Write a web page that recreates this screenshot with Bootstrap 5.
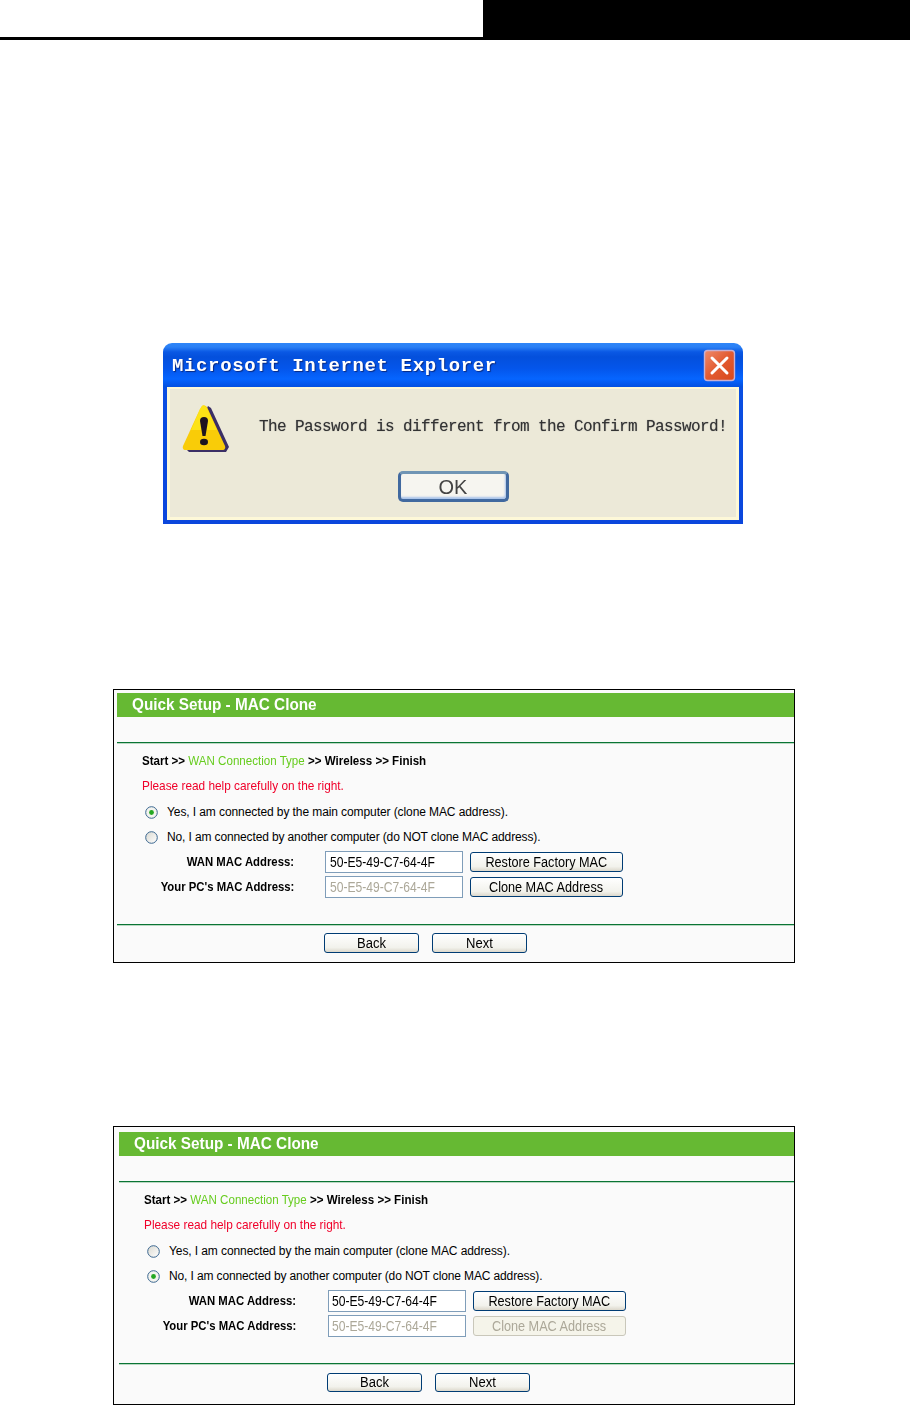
<!DOCTYPE html>
<html lang="en">
<head>
<meta charset="utf-8">
<meta name="viewport" content="width=device-width, initial-scale=1">
<title>Quick Setup - MAC Clone</title>
<link href="https://cdn.jsdelivr.net/npm/bootstrap@5.3.0/dist/css/bootstrap.min.css" rel="stylesheet">
<style>
body{font-family:"Liberation Sans",Arial,sans-serif;color:#000;background:#fff;height:1405px;overflow:hidden}
.topbar{height:40px;border-bottom:3px solid #000}
.topbar-dark{width:427px;background:#000}
/* XP message box */
.xp{width:580px;height:181px;margin:303px 0 0 163px;background:linear-gradient(#2f86f8 0,#2a80f5 4px,#0a58e4 9px,#0450dc 14px,#0455ea 25px,#0665ff 36px,#0450e0 44px,#0b4fe2 46px,#0b46dc 100%);border-radius:9px 9px 0 0;padding:0 4px 4px;filter:blur(.3px)}
.xp-title{height:44px;padding:1px 3px 0 5px}
.xp-title span{font:bold 19px "Liberation Mono",monospace;letter-spacing:.63px;color:#fff;text-shadow:1px 1px 1px #0a2a80;filter:blur(.6px)}
.xp-body{height:133px;background:#ece9d8;border:3px solid #fdf8d8;border-top-width:2px}
.xp-row{height:82px;padding-left:12px}
.xp-msg{margin-left:29px;margin-top:-6px;font:16px "Liberation Mono",monospace;letter-spacing:-.6px;white-space:nowrap;color:#333;text-shadow:0 0 1px #888;filter:blur(.7px)}
.xp-ok{width:111px;height:31px;border:3px solid #41699f;border-top-color:#7095b5;border-radius:5px;background:#f6f5f0;box-shadow:inset -1px -2px 2px #a9c3ea;font-size:20px;line-height:27px;color:#444;padding:0;filter:blur(.6px)}
/* Setup panels */
.panel{width:682px;margin-left:113px;border:1px solid #000;background:#fafafa}
.panel-a{height:274px;margin-top:165px;padding:3px 0 0 3px}
.panel-b{height:279px;margin-top:163px;padding:5px 0 0 5px}
.panel span.sx{display:inline-block;transform-origin:0 50%}
.bar{height:24px;background:#66b933;color:#fff;font-weight:bold;font-size:16px;line-height:23px;padding-left:15px;margin-bottom:25px}
.bar .sx{transform:scaleX(.957)}
.rule{height:2px;background:#0a7434;border-bottom:1px solid #b9d8c2}
.line{white-space:nowrap;padding-left:25px;font-size:13px;line-height:18px;height:18px;margin-top:8px}
.line .sx{transform:scaleX(.89)}
.go{color:#66cc1e}
.warn{color:#f0002a;margin:7px 0 8px;padding-left:24.500px}
.warn .sx{transform:scaleX(.91)}
.opt{font-size:12px;height:18px;line-height:18px;padding-left:28px;white-space:nowrap;letter-spacing:-.09px;margin-bottom:7px}
.opt svg{margin-right:9px;flex:none}
.opt + .opt{letter-spacing:-.13px;margin-bottom:5px}
.frow{height:22px;margin-bottom:3px}
.lbl{width:177px;text-align:right;font-weight:bold;font-size:13px;white-space:nowrap}
.panel .lbl .sx{transform:scaleX(.872);transform-origin:100% 50%}
.inp{width:138px;height:22px;border:1px solid #7f9db9;background:#fff;font-size:14px;line-height:20px;padding:0 0 0 4px;margin-left:31px;white-space:nowrap}
.inp .sx{transform:scaleX(.865)}
.panel-b .inp{margin-left:32px;padding-left:3px}
.off{color:#aca899}
.xbtn,.xbtn:hover{height:20px;border:1px solid #003c74;border-radius:3px;background:linear-gradient(#fff,#f2f2ec 75%,#dcd8cc);font-size:14px;line-height:18px;padding:0;color:#000;white-space:nowrap}
.panel .xbtn .sx{transform:scaleX(.905);transform-origin:50% 50%}
.xbtn:disabled{opacity:1;background:#f5f4ea;border-color:#c9c7ba;color:#aca899}
.wide{width:153px;margin-left:7px}
.foot-rule{margin-top:26px}
.steps{gap:13px;padding-left:207px;margin-top:7px}
.steps .xbtn{width:95px}
.panel .steps .sx{transform:scaleX(.93)}
.panel-b .steps{padding-left:208px;margin-top:8px}
.panel-b .steps .xbtn{height:19px;line-height:17px}
</style>
</head>
<body>
<svg width="0" height="0" class="position-absolute">
  <defs><linearGradient id="rg" x1="0" y1="0" x2="1" y2="1"><stop offset="0" stop-color="#d9d8d0"/><stop offset="1" stop-color="#fff"/></linearGradient></defs>
  <symbol id="radio" viewBox="0 0 13 13"><circle cx="6.500" cy="6.500" r="5.800" fill="url(#rg)" stroke="#3b6790" stroke-width="1"/></symbol>
  <symbol id="radio-on" viewBox="0 0 13 13"><circle cx="6.500" cy="6.500" r="5.800" fill="#f4f4ef" stroke="#3b6790" stroke-width="1"/><circle cx="6.500" cy="6.500" r="2.400" fill="#25a822"/></symbol>
</svg>

<header class="topbar d-flex justify-content-end"><div class="topbar-dark"></div></header>

<section class="xp">
  <div class="xp-title d-flex align-items-center justify-content-between"><span>Microsoft Internet Explorer</span>
    <svg width="33" height="33" viewBox="0 0 33 33"><defs><linearGradient id="cg" x1="0" y1="0" x2="1" y2="1"><stop offset="0" stop-color="#ef8b6c"/><stop offset=".5" stop-color="#e25a30"/><stop offset="1" stop-color="#d8481c"/></linearGradient></defs><rect x="1.500" y="1.500" width="30" height="30" rx="3" fill="url(#cg)" stroke="#c9b0d0" stroke-width="1.400"/><path d="M9 9L24 24M24 9L9 24" stroke="#fff" stroke-width="3" stroke-linecap="round"/></svg>
  </div>
  <div class="xp-body">
    <div class="xp-row d-flex align-items-center">
      <svg width="48" height="50" viewBox="0 0 48 50"><path d="M26 1L29 3L47 42L44 47H7L4 44Z" fill="#3b2f66"/><path d="M20 1Q22 -1 25 2L43 41Q44 45 40 45H4Q0 45 1 41L18 4Z" fill="#f9cc08"/><path d="M20 1Q22 -1 25 3L35 25H9L18 4Z" fill="#ffec1c" opacity=".7"/><path d="M18 16Q18 12 22 12Q26 12 26 16L23.500 31H20.500Z" fill="#1d1420"/><ellipse cx="22" cy="37" rx="4" ry="3.200" fill="#1d1420"/></svg>
      <span class="xp-msg">The Password is different from the Confirm Password!</span>
    </div>
    <div class="d-flex justify-content-center"><button class="btn xp-ok">OK</button></div>
  </div>
</section>

<section class="panel panel-a">
  <div class="bar"><span class="sx">Quick Setup - MAC Clone</span></div>
  <div class="rule"></div>
  <div class="line"><span class="sx"><b>Start &gt;&gt;</b> <span class="go">WAN Connection Type</span> <b>&gt;&gt; Wireless &gt;&gt; Finish</b></span></div>
  <div class="line warn"><span class="sx">Please read help carefully on the right.</span></div>
  <div class="opt d-flex align-items-center"><svg width="13" height="13"><use href="#radio-on"/></svg>Yes, I am connected by the main computer (clone MAC address).</div>
  <div class="opt d-flex align-items-center"><svg width="13" height="13"><use href="#radio"/></svg>No, I am connected by another computer (do NOT clone MAC address).</div>
  <div class="frow d-flex align-items-center"><div class="lbl d-flex justify-content-end"><span class="sx">WAN MAC Address:</span></div><div class="inp"><span class="sx">50-E5-49-C7-64-4F</span></div><button class="btn xbtn wide"><span class="sx">Restore Factory MAC</span></button></div>
  <div class="frow d-flex align-items-center"><div class="lbl d-flex justify-content-end"><span class="sx">Your PC's MAC Address:</span></div><div class="inp off"><span class="sx">50-E5-49-C7-64-4F</span></div><button class="btn xbtn wide"><span class="sx">Clone MAC Address</span></button></div>
  <div class="rule foot-rule"></div>
  <div class="steps d-flex"><button class="btn xbtn"><span class="sx">Back</span></button><button class="btn xbtn"><span class="sx">Next</span></button></div>
</section>

<section class="panel panel-b">
  <div class="bar"><span class="sx">Quick Setup - MAC Clone</span></div>
  <div class="rule"></div>
  <div class="line"><span class="sx"><b>Start &gt;&gt;</b> <span class="go">WAN Connection Type</span> <b>&gt;&gt; Wireless &gt;&gt; Finish</b></span></div>
  <div class="line warn"><span class="sx">Please read help carefully on the right.</span></div>
  <div class="opt d-flex align-items-center"><svg width="13" height="13"><use href="#radio"/></svg>Yes, I am connected by the main computer (clone MAC address).</div>
  <div class="opt d-flex align-items-center"><svg width="13" height="13"><use href="#radio-on"/></svg>No, I am connected by another computer (do NOT clone MAC address).</div>
  <div class="frow d-flex align-items-center"><div class="lbl d-flex justify-content-end"><span class="sx">WAN MAC Address:</span></div><div class="inp"><span class="sx">50-E5-49-C7-64-4F</span></div><button class="btn xbtn wide"><span class="sx">Restore Factory MAC</span></button></div>
  <div class="frow d-flex align-items-center"><div class="lbl d-flex justify-content-end"><span class="sx">Your PC's MAC Address:</span></div><div class="inp off"><span class="sx">50-E5-49-C7-64-4F</span></div><button class="btn xbtn wide" disabled><span class="sx">Clone MAC Address</span></button></div>
  <div class="rule foot-rule"></div>
  <div class="steps d-flex"><button class="btn xbtn"><span class="sx">Back</span></button><button class="btn xbtn"><span class="sx">Next</span></button></div>
</section>
<script src="https://cdn.jsdelivr.net/npm/bootstrap@5.3.0/dist/js/bootstrap.bundle.min.js"></script>
</body>
</html>
